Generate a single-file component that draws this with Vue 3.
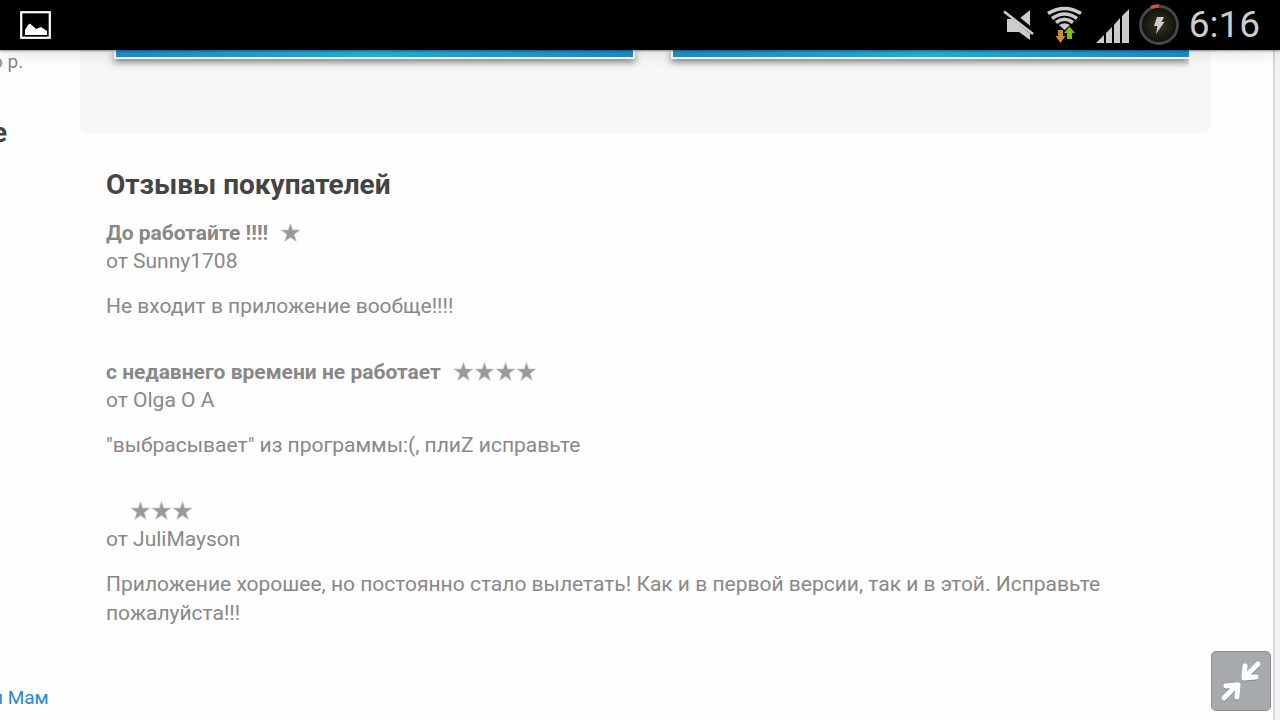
<script setup>
const reviews = [
  { title: 'До работайте !!!!', stars: 1, author: 'Sunny1708', text: 'Не входит в приложение вообще!!!!' },
  { title: 'с недавнего времени не работает', stars: 4, author: 'Olga O A', text: '"выбрасывает" из программы:(, плиZ исправьте' },
  { title: '', stars: 3, author: 'JuliMayson', text: 'Приложение хорошее, но постоянно стало вылетать! Как и в первой версии, так и в этой. Исправьте пожалуйста!!!' },
]
</script>

<template>
  <div class="screen">
    <header class="status">
      <svg class="picture" width="32" height="30" viewBox="0 0 32 30">
        <rect x="1.2" y="2.2" width="28.6" height="25.6" fill="none" stroke="#fff" stroke-width="2.2" />
        <path d="M5 25V20L8 15L10 13.5L16 19L21 17L27 21V25Z" fill="#fff" />
      </svg>
      <div class="indicators">
        <svg width="34" height="50" viewBox="0 0 34 50">
          <path d="M30 10V40L19 32H7V19H19Z" fill="#ccc" />
          <path d="M6 10L34 33" stroke="#000" stroke-width="6" />
          <path d="M4 11.5L33 34" stroke="#ccc" stroke-width="2.6" />
        </svg>
        <svg width="36" height="50" viewBox="0 0 36 50">
          <g fill="none" stroke="#ccc" stroke-width="3.6">
            <path d="M1 13.5Q17.5 3.500 34 13.5" />
            <path d="M5 18.5Q17.5 9.500 30 18.5" />
            <path d="M9 22.5Q17.5 16 26 22.5" />
          </g>
          <path d="M12 25Q17.5 21.5 23 25L17.5 30Z" fill="#ccc" />
          <path d="M11 30H16V36H18.5L13.5 43L8.5 36H11Z" fill="#c88b36" />
          <path d="M20 39V33H17L22.5 26.5L28 33H25V39Z" fill="#80be0a" />
        </svg>
        <svg width="34" height="50" viewBox="0 0 34 50">
          <path d="M0 43L8 35V43ZM10 43V33L16 27V43ZM18 43V25L24 18V43ZM26 43V16L33 9V43Z" fill="#ccc" />
        </svg>
        <svg width="44" height="50" viewBox="0 0 44 50">
          <defs>
            <radialGradient id="glow">
              <stop offset="0" stop-color="#393820" />
              <stop offset="1" stop-color="#0e0e08" />
            </radialGradient>
          </defs>
          <circle cx="22" cy="25" r="18.5" fill="url(#glow)" stroke="#484848" stroke-width="2.8" />
          <path d="M14 7.5Q18 5.5 22 6" fill="none" stroke="#d14d44" stroke-width="3.5" />
          <path d="M20 17H27L24.5 22H27.5L19 34L20.500 26H17Z" fill="#ccc" />
        </svg>
        <time class="clock">6:16</time>
      </div>
    </header>

    <div class="page">
      <aside class="side">
        <p class="price">о р.</p>
        <h3 class="side-title">е</h3>
        <a class="side-link" href="#">и Мам</a>
      </aside>
      <main class="content">
        <section class="gallery">
          <div class="shots">
            <div class="shot"></div>
            <div class="shot shot-cut"></div>
          </div>
        </section>
        <section class="reviews">
          <h2>Отзывы покупателей</h2>
          <article v-for="review in reviews" :key="review.author" class="review">
            <div class="head">
              <h3>{{ review.title }}</h3>
              <span class="stars" role="img" :aria-label="`Оценка: ${review.stars}`">
                <svg v-for="n in review.stars" :key="n" width="21" height="20" viewBox="0 0 21 20">
                  <path
                    d="M10.500 .5L12.800 7H20L14.200 11.400L16.300 18.500L10.500 14.400L4.700 18.500L6.800 11.400L1 7H8.200Z"
                    fill="#999" stroke="#ccc" stroke-width=".6"
                  />
                </svg>
              </span>
            </div>
            <p class="author">от {{ review.author }}</p>
            <p class="text">{{ review.text }}</p>
          </article>
        </section>
      </main>
      <div class="edge"></div>
    </div>

    <button class="collapse" type="button" aria-label="Свернуть">
      <svg width="58" height="58" viewBox="0 0 58 58">
        <g fill="none" stroke-linecap="round" stroke-linejoin="round" stroke-width="5">
          <path
            d="M46 13L33 26M33 15L32 27L44 26M12 47L25 34M14 35L26 34L25 46"
            stroke="#85888a"
          />
          <path d="M46 12L33 25M33 14L32 26L44 25M12 46L25 33M14 34L26 33L25 45" stroke="#fff" />
        </g>
      </svg>
    </button>
  </div>
</template>

<style>
body {
  background: #fefefe;
}
</style>

<style scoped>
.screen {
  position: relative;
  display: flex;
  flex-direction: column;
  min-height: 100vh;
  overflow: hidden;
  background: #fefefe;
  font-family: Roboto, "Noto Sans", sans-serif;
  color: #888;
}
h2, h3, p {
  margin: 0;
}
svg {
  display: block;
  flex: none;
}
.status {
  position: relative;
  z-index: 1;
  display: flex;
  align-items: center;
  justify-content: space-between;
  height: 50px;
  padding: 0 20px;
  background: #000;
  box-shadow: 0 0 20px rgba(0, 0, 0, 0.16), 0 1px 2px rgba(0, 0, 0, 0.4);
}
.indicators {
  display: flex;
  align-items: center;
}
.indicators svg {
  margin-right: 8px;
}
.indicators svg:nth-of-type(1) {
  margin-right: 13px;
}
.indicators svg:nth-of-type(2) {
  margin-right: 13px;
}
.indicators svg:nth-of-type(3) {
  margin-right: 7px;
}
.clock {
  color: #ccc;
  font-size: 37px;
  font-weight: 400;
  line-height: 50px;
}
.page {
  display: flex;
  flex: 1;
}
.side {
  display: flex;
  flex-direction: column;
  width: 80px;
  overflow: hidden;
  font-size: 19px;
  line-height: 24px;
  white-space: nowrap;
}
.price {
  margin-left: -8px;
}
.side-title {
  margin-top: 43px;
  margin-left: -8px;
  color: #444;
  font-size: 28px;
  line-height: 32px;
}
.side-link {
  margin-top: auto;
  margin-bottom: 10px;
  margin-left: -8px;
  color: #2489db;
  text-decoration: none;
}
.content {
  flex: 1;
  min-width: 0;
  padding-right: 63px;
}
.gallery {
  height: 83px;
  padding: 0 21px 0 34px;
  border-radius: 0 0 6px 6px;
  background: #f7f7f7;
}
.shots {
  display: flex;
  gap: 36px;
  height: 26px;
  margin-left: -8px;
  padding-left: 8px;
  overflow: hidden;
}
.shot {
  box-sizing: border-box;
  flex: 1;
  height: 9px;
  border: solid #fff;
  border-width: 0 2px 2px;
  background: linear-gradient(90deg, #1f90d2, #27b4dc 50%, #1f8dd2);
  box-shadow: 0 3px 7px rgba(0, 0, 0, 0.5);
}
.shot-cut {
  border-right-width: 0;
}
.reviews {
  padding: 34px 26px 0;
}
h2 {
  margin-bottom: 17px;
  color: #444;
  font-size: 28px;
  line-height: 36px;
}
.review {
  margin-bottom: 38px;
  font-size: 21px;
  line-height: 29px;
}
.head {
  display: flex;
  align-items: center;
  gap: 12px;
  height: 27px;
}
.head h3 {
  font-size: 21px;
}
.head h3:empty {
  width: 12px;
}
.stars {
  display: flex;
  padding-bottom: 2px;
}
.author {
  line-height: 28px;
}
.text {
  margin-top: 17px;
}
.edge {
  box-sizing: border-box;
  width: 7px;
  border-left: 2px solid #d5d8db;
  background: #f2f3f5;
}
.collapse {
  position: absolute;
  right: 9px;
  bottom: 9px;
  box-sizing: border-box;
  width: 60px;
  height: 60px;
  padding: 0;
  border: 1px solid #8c8c90;
  border-radius: 5px;
  background: #a7aaac;
}
</style>
